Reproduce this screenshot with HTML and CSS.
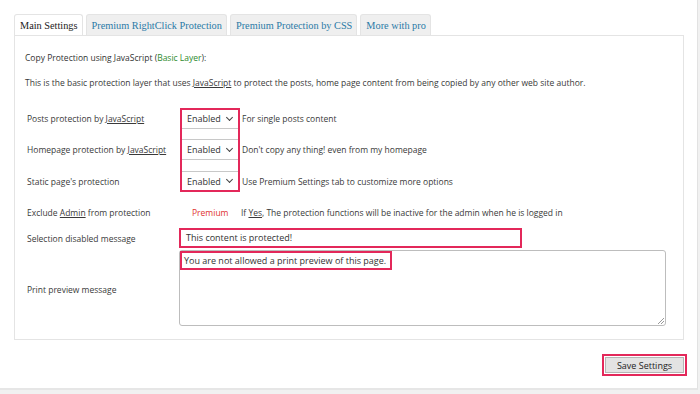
FILE: index.html
```html
<!DOCTYPE html>
<html lang="en">
  <head>
    <meta charset="UTF-8" />
    <meta name="viewport" content="width=device-width, initial-scale=1.0" />
    <title>Copy Protection Settings</title>
    <link rel="stylesheet" href="styles.css">
  </head>
  <body>
    <div class="wrap">
      <div class="tabs">
        <a class="tab active">Main Settings</a>
        <a class="tab">Premium RightClick Protection</a>
        <a class="tab">Premium Protection by CSS</a>
        <a class="tab">More with pro</a>
      </div>

      <div class="panel">
        <p class="heading">Copy Protection using JavaScript (<span class="green">Basic Layer</span>):</p>
        <p class="intro">This is the basic protection layer that uses <u>JavaScript</u> to protect the posts, home page content from being copied by any other web site author.</p>

        <div class="form">
          <div class="label"><span>Posts protection by <u>JavaScript</u></span></div>
          <div class="field first">
            <div class="select">Enabled <span class="chev"></span></div>
            <span class="desc">For single posts content</span>
            <div class="mark"></div>
          </div>

          <div class="label"><span>Homepage protection by <u>JavaScript</u></span></div>
          <div class="field">
            <div class="select">Enabled <span class="chev"></span></div>
            <span class="desc">Don't copy any thing! even from my homepage</span>
          </div>

          <div class="label"><span>Static page's protection</span></div>
          <div class="field">
            <div class="select">Enabled <span class="chev"></span></div>
            <span class="desc">Use Premium Settings tab to customize more options</span>
          </div>

          <div class="label"><span>Exclude <u>Admin</u> from protection</span></div>
          <div class="field">
            <span class="premium">Premium</span>
            <span class="desc">If <u>Yes</u>, The protection functions will be inactive for the admin when he is logged in</span>
          </div>

          <div class="label"><span>Selection disabled message</span></div>
          <div class="field">
            <div class="input">This content is protected!</div>
          </div>

          <div class="label"><span>Print preview message</span></div>
          <div class="field">
            <div class="textarea"><span class="line">You are not allowed a print preview of this page.</span><span class="grip"></span></div>
          </div>
        </div>
      </div>

      <div class="actions">
        <span class="btn-mark"><button class="button">Save Settings</button></span>
      </div>
    </div>
  </body>
</html>
```

FILE: styles.css
```css
body {
  margin: 0;
  background: #f1f1f1;
  font-family: "Open Sans", "Noto Sans", sans-serif;
  font-size: 8.5px;
  color: #3a3a3a;
}
.wrap {
  width: 673px;
  height: 374px;
  padding: 14px 10px 0 14px;
  background: #fff;
  border-right: 1px solid #e2e2e2;
  border-bottom: 2px solid #e6e6e6;
}
.tabs {
  display: flex;
  gap: 3px;
  height: 21px;
}
.tab {
  display: block;
  padding: 0 4px 0 5px;
  line-height: 21px;
  font-family: "Liberation Serif", serif;
  font-size: 10.3px;
  color: #2a7aa6;
  background: #efefef;
  border: 1px solid #e4e4e4;
  border-bottom: none;
  border-radius: 3px 3px 0 0;
  box-sizing: border-box;
  height: 21px;
}
.tab.active {
  color: #222;
  background: #fff;
}
.panel {
  width: 670px;
  height: 305px;
  box-sizing: border-box;
  border: 1px solid #e4e4e4;
  padding: 15px 10px 0 10px;
}
.heading {
  margin: 0;
  line-height: 14px;
  color: #333;
}
.green {
  color: #2d8a2d;
}
.intro {
  margin: 11px 0 0 0;
  line-height: 14px;
}
.form {
  display: grid;
  grid-template-columns: 154px 1fr;
  grid-template-rows: 31px 31px 32px 30px 22px 80px;
  margin-top: 13px;
  padding-left: 2px;
}
.label {
  display: flex;
  align-items: center;
}
.field {
  display: flex;
  align-items: center;
  gap: 3px;
  white-space: nowrap;
}
.field.first {
  position: relative;
}
.select {
  width: 58px;
  height: 21px;
  box-sizing: border-box;
  border: 1px solid #c8c8c8;
  padding: 0 6px 0 5px;
  display: flex;
  align-items: center;
  justify-content: space-between;
  font-size: 9px;
  color: #333;
}
.chev {
  width: 4px;
  height: 4px;
  border-right: 1px solid #444;
  border-bottom: 1px solid #444;
  transform: rotate(45deg);
  margin-top: -3px;
}
.mark {
  position: absolute;
  left: -1px;
  top: 5px;
  width: 60px;
  height: 84px;
  box-sizing: border-box;
  border: 2px solid #e3285a;
  pointer-events: none;
}
.premium {
  color: #e0312f;
  width: 57px;
  padding-left: 11px;
  box-sizing: border-box;
}
.input {
  width: 343px;
  height: 20px;
  margin-left: -2px;
  box-sizing: border-box;
  border: 2px solid #e3285a;
  padding: 0 5px;
  line-height: 16px;
  font-size: 9px;
  color: #333;
}
.textarea {
  position: relative;
  width: 487px;
  height: 76px;
  margin: 1px 0 0 -2px;
  box-sizing: border-box;
  border: 1px solid #bdbdbd;
  border-radius: 3px;
  align-self: flex-start;
}
.line {
  display: inline-block;
  border: 2px solid #e3285a;
  padding: 0 4px 0 2px;
  line-height: 15px;
  font-size: 9px;
  color: #333;
}
.grip {
  position: absolute;
  right: 1px;
  bottom: 1px;
  width: 6px;
  height: 6px;
  background: linear-gradient(135deg, transparent 45%, #999 45%, #999 55%, transparent 55%, transparent 70%, #999 70%, #999 80%, transparent 80%);
}
.actions {
  display: flex;
  justify-content: flex-end;
  margin-top: 14px;
}
.btn-mark {
  display: inline-block;
  border: 2px solid #e3285a;
  padding: 1px;
}
.button {
  display: block;
  width: 79px;
  height: 16px;
  border: 1px solid #b5b5b5;
  background: #e3e3e3;
  font-family: "Open Sans", "Noto Sans", sans-serif;
  font-size: 9px;
  color: #222;
  padding: 0;
}
```
